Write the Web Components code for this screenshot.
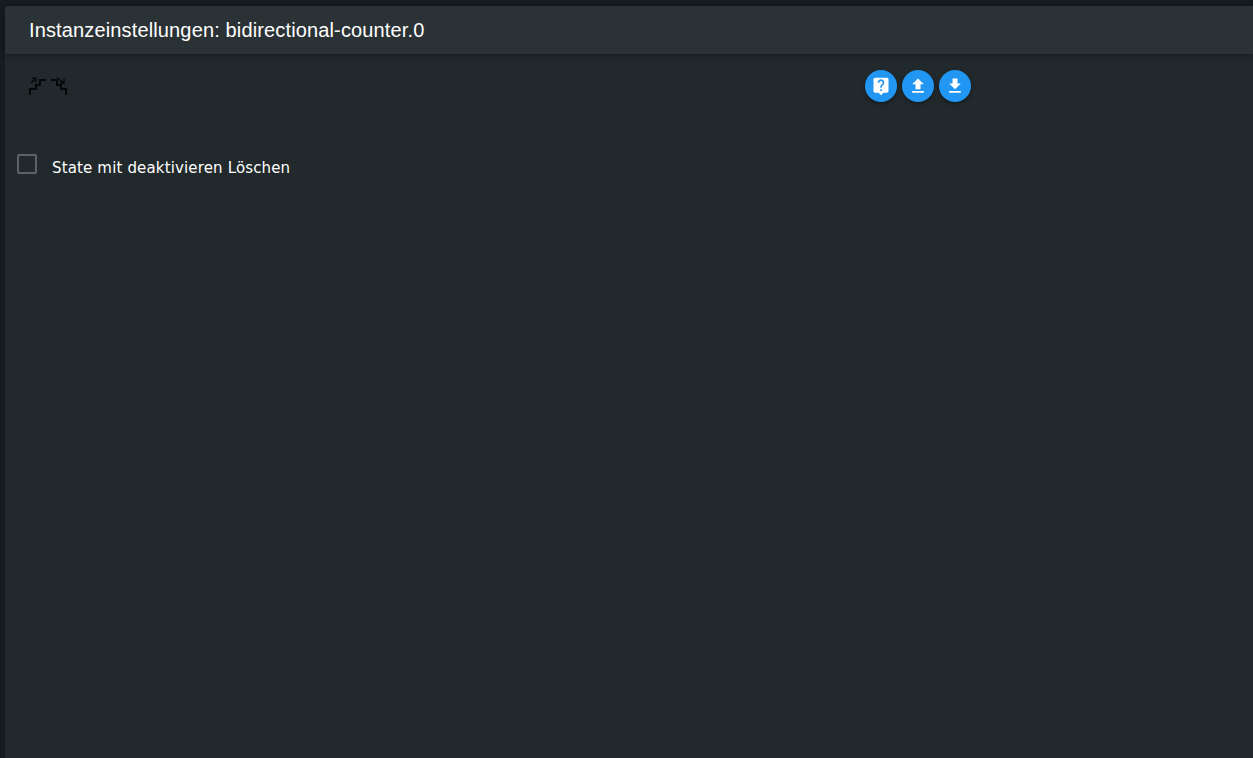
<!DOCTYPE html>
<html lang="de">
<head>
<meta charset="utf-8">
<title>Instanzeinstellungen</title>
<style>
  html, body { height: 100%; }
  body {
    margin: 0;
    background: #141c1f;
    overflow: hidden;
  }
</style>
</head>
<body>
<settings-page>
  <span slot="title">Instanzeinstellungen: bidirectional-counter.0</span>
  <settings-toolbar slot="toolbar">
    <round-button icon="help" title="Hilfe"></round-button>
    <round-button icon="upload" title="Laden"></round-button>
    <round-button icon="download" title="Speichern"></round-button>
  </settings-toolbar>
  <settings-checkbox>State mit deaktivieren Löschen</settings-checkbox>
</settings-page>

<script>
class SettingsPage extends HTMLElement {
  constructor() {
    super();
    this.attachShadow({ mode: 'open' }).innerHTML = `
      <style>
        :host {
          display: flex;
          flex-direction: column;
          box-sizing: border-box;
          height: 100vh;
          padding: 6px 0 0 5px;
        }
        .panel {
          flex: 1;
          display: flex;
          flex-direction: column;
          background: #22292c;
          border-top-left-radius: 4px;
        }
        header {
          height: 48px;
          padding-left: 24px;
          display: flex;
          align-items: center;
          background: #2b3235;
          color: #fff;
          font: 20px "Liberation Sans", Arial, sans-serif;
          letter-spacing: .14px;
          border-top-left-radius: 4px;
          box-shadow: 0 2px 5px rgba(0, 0, 0, .3);
        }
        .body {
          flex: 1;
          padding: 16px 0 0 12px;
        }
      </style>
      <div class="panel">
        <header><slot name="title"></slot></header>
        <div class="body">
          <slot name="toolbar"></slot>
          <slot></slot>
        </div>
      </div>
    `;
  }
}

class SettingsToolbar extends HTMLElement {
  constructor() {
    super();
    this.attachShadow({ mode: 'open' }).innerHTML = `
      <style>
        :host {
          display: flex;
          height: 32px;
          margin-bottom: 52px;
        }
        svg {
          width: 40px;
          height: 20px;
          margin: 6px 0 0 11px;
          flex: none;
          fill: none;
          stroke: #050809;
          stroke-width: 1.5;
        }
        .stairs { stroke-width: 2; }
        .buttons {
          display: flex;
          gap: 5px;
          margin-left: 797px;
        }
      </style>
      <svg viewBox="0 0 40 20" aria-hidden="true">
        <path class="stairs" d="M2 19v-6h6V9h4V4h6"/>
        <path d="M3 7l4-4M3.5 2.2h4.3v4"/>
        <path class="stairs" d="M23 4h6v5h4v4h5v6"/>
        <path d="M29 1.5l6 5M36 2.5v4.5h-4"/>
      </svg>
      <div class="buttons"><slot></slot></div>
    `;
  }
}

const ROUND_ICONS = {
  help: 'M19 2H5c-1.11 0-2 .9-2 2v14c0 1.1.89 2 2 2h4l3 3 3-3h4c1.1 0 2-.9 2-2V4c0-1.1-.9-2-2-2zm-6 16h-2v-2h2v2zm2.07-7.75l-.9.92C13.45 11.9 13 12.5 13 14h-2v-.5c0-1.1.45-2.1 1.17-2.83l1.24-1.26c.37-.36.59-.86.59-1.41 0-1.1-.9-2-2-2s-2 .9-2 2H8c0-2.21 1.79-4 4-4s4 1.79 4 4c0 .88-.36 1.68-.93 2.25z',
  upload: 'M9 16h6v-6h4l-7-7-7 7h4zm-4 2h14v2H5z',
  download: 'M19 9h-4V3H9v6H5l7 7 7-7zM5 18v2h14v-2H5z'
};

class RoundButton extends HTMLElement {
  constructor() {
    super();
    const d = ROUND_ICONS[this.getAttribute('icon')];
    this.attachShadow({ mode: 'open' }).innerHTML = `
      <style>
        :host {
          display: flex;
          align-items: center;
          justify-content: center;
          width: 32px;
          height: 32px;
          border-radius: 50%;
          background: #2196f3;
          box-shadow: 0 2px 4px rgba(0, 0, 0, .35);
          cursor: pointer;
        }
        svg { width: 20px; height: 20px; fill: #fff; }
      </style>
      <svg viewBox="0 0 24 24" aria-hidden="true"><path d="${d}"/></svg>
    `;
  }
}

class SettingsCheckbox extends HTMLElement {
  constructor() {
    super();
    this.attachShadow({ mode: 'open' }).innerHTML = `
      <style>
        :host {
          display: flex;
          align-items: flex-start;
          color: #fff;
          font: 15px "DejaVu Sans", Verdana, sans-serif;
          letter-spacing: .15px;
        }
        .box {
          box-sizing: border-box;
          width: 20px;
          height: 20px;
          border: 2px solid #5d6264;
          border-radius: 2px;
          flex: none;
        }
        label { margin: 5px 0 0 15px; }
      </style>
      <span class="box"></span>
      <label><slot></slot></label>
    `;
  }
}

customElements.define('settings-page', SettingsPage);
customElements.define('settings-toolbar', SettingsToolbar);
customElements.define('round-button', RoundButton);
customElements.define('settings-checkbox', SettingsCheckbox);
</script>
</body>
</html>
